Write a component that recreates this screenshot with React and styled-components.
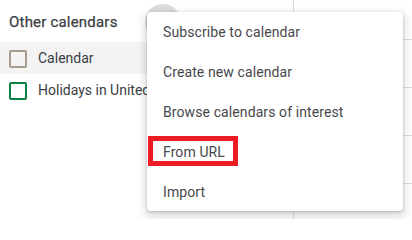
import styled, { createGlobalStyle } from "styled-components";

const MENU_ITEMS = [
  "Subscribe to calendar",
  "Create new calendar",
  "Browse calendars of interest",
  "From URL",
  "Import",
];

const CALENDARS = [
  { name: "Calendar", color: "#a79b8e", active: true },
  { name: "Holidays in United States", color: "#0b8043" },
];

export default function App() {
  return (
    <>
      <GlobalStyle />
      <Page>
        <Sidebar>
          <SectionHeader>
            <SectionTitle>Other calendars</SectionTitle>
            <AddButton aria-label="Add other calendars" />
          </SectionHeader>
          {CALENDARS.map((calendar) => (
            <CalendarRow key={calendar.name} $active={calendar.active}>
              <Checkbox $color={calendar.color} />
              <CalendarName>{calendar.name}</CalendarName>
            </CalendarRow>
          ))}
        </Sidebar>
        <Gutter />
        <Grid>
          <GridRow $first />
          <GridRow />
          <GridRow />
          <GridRow />
          <GridRow />
        </Grid>

        <Menu role="menu">
          {MENU_ITEMS.map((item) => (
            <MenuItem key={item} role="menuitem">
              {item}
              {item === "From URL" && <Highlight />}
            </MenuItem>
          ))}
        </Menu>
      </Page>
    </>
  );
}

const GlobalStyle = createGlobalStyle`
  html, body {
    margin: 0;
    padding: 0;
    background: #fff;
  }
  body {
    font-family: Roboto, "Liberation Sans", Arial, sans-serif;
    color: #3c4043;
    overflow: hidden;
  }
`;

const Page = styled.div`
  position: relative;
  display: flex;
  width: 412px;
  height: 219px;
  overflow: hidden;
  background: #fff;
`;

const Sidebar = styled.aside`
  width: 190px;
  flex-shrink: 0;
  display: flex;
  flex-direction: column;
`;

const SectionHeader = styled.div`
  height: 42px;
  display: flex;
  align-items: center;
  justify-content: space-between;
  padding: 0 9px;
  box-sizing: border-box;
`;

const SectionTitle = styled.span`
  font-size: 15px;
  font-weight: 400;
  letter-spacing: 0.2px;
  color: #3c4043;
  margin-top: 2px;
  -webkit-text-stroke: 0.25px #3c4043;
`;

const AddButton = styled.div`
  width: 36px;
  height: 36px;
  border-radius: 50%;
  background: #dcdcdc;
  margin-top: 2px;
`;

const CalendarRow = styled.div`
  height: 32px;
  display: flex;
  align-items: center;
  gap: 11px;
  padding-left: 9px;
  background: ${({ $active }) => ($active ? "#f3f3f3" : "transparent")};
  white-space: nowrap;
`;

const Checkbox = styled.span`
  width: 14px;
  height: 14px;
  flex-shrink: 0;
  border: 2px solid ${({ $color }) => $color};
  border-radius: 2px;
  margin-top: 1px;
`;

const CalendarName = styled.span`
  font-size: 14px;
  color: #3c4043;
`;

const Gutter = styled.div`
  width: 103px;
  flex-shrink: 0;
`;

const Grid = styled.div`
  flex: 1;
  border-left: 1px solid #dadce0;
  display: flex;
  flex-direction: column;
`;

const GridRow = styled.div`
  height: ${({ $first }) => ($first ? "40px" : "48px")};
  flex-shrink: 0;
  border-bottom: 1px solid #dadce0;
  box-sizing: border-box;
`;

const Menu = styled.div`
  position: absolute;
  left: 147px;
  top: 12px;
  width: 256px;
  height: 199px;
  background: #fff;
  border-radius: 4px;
  box-shadow: 0 1px 3px 0 rgba(60, 64, 67, 0.3),
    0 4px 8px 3px rgba(60, 64, 67, 0.15);
  display: flex;
  flex-direction: column;
`;

const MenuItem = styled.div`
  position: relative;
  height: 40px;
  flex-shrink: 0;
  display: flex;
  align-items: center;
  padding-left: 16px;
  font-size: 14px;
  color: #45484c;
  letter-spacing: 0.1px;
`;

const Highlight = styled.span`
  position: absolute;
  left: 1px;
  top: 4px;
  width: 90px;
  height: 30px;
  box-sizing: border-box;
  border: 5px solid #ed1c24;
`;
